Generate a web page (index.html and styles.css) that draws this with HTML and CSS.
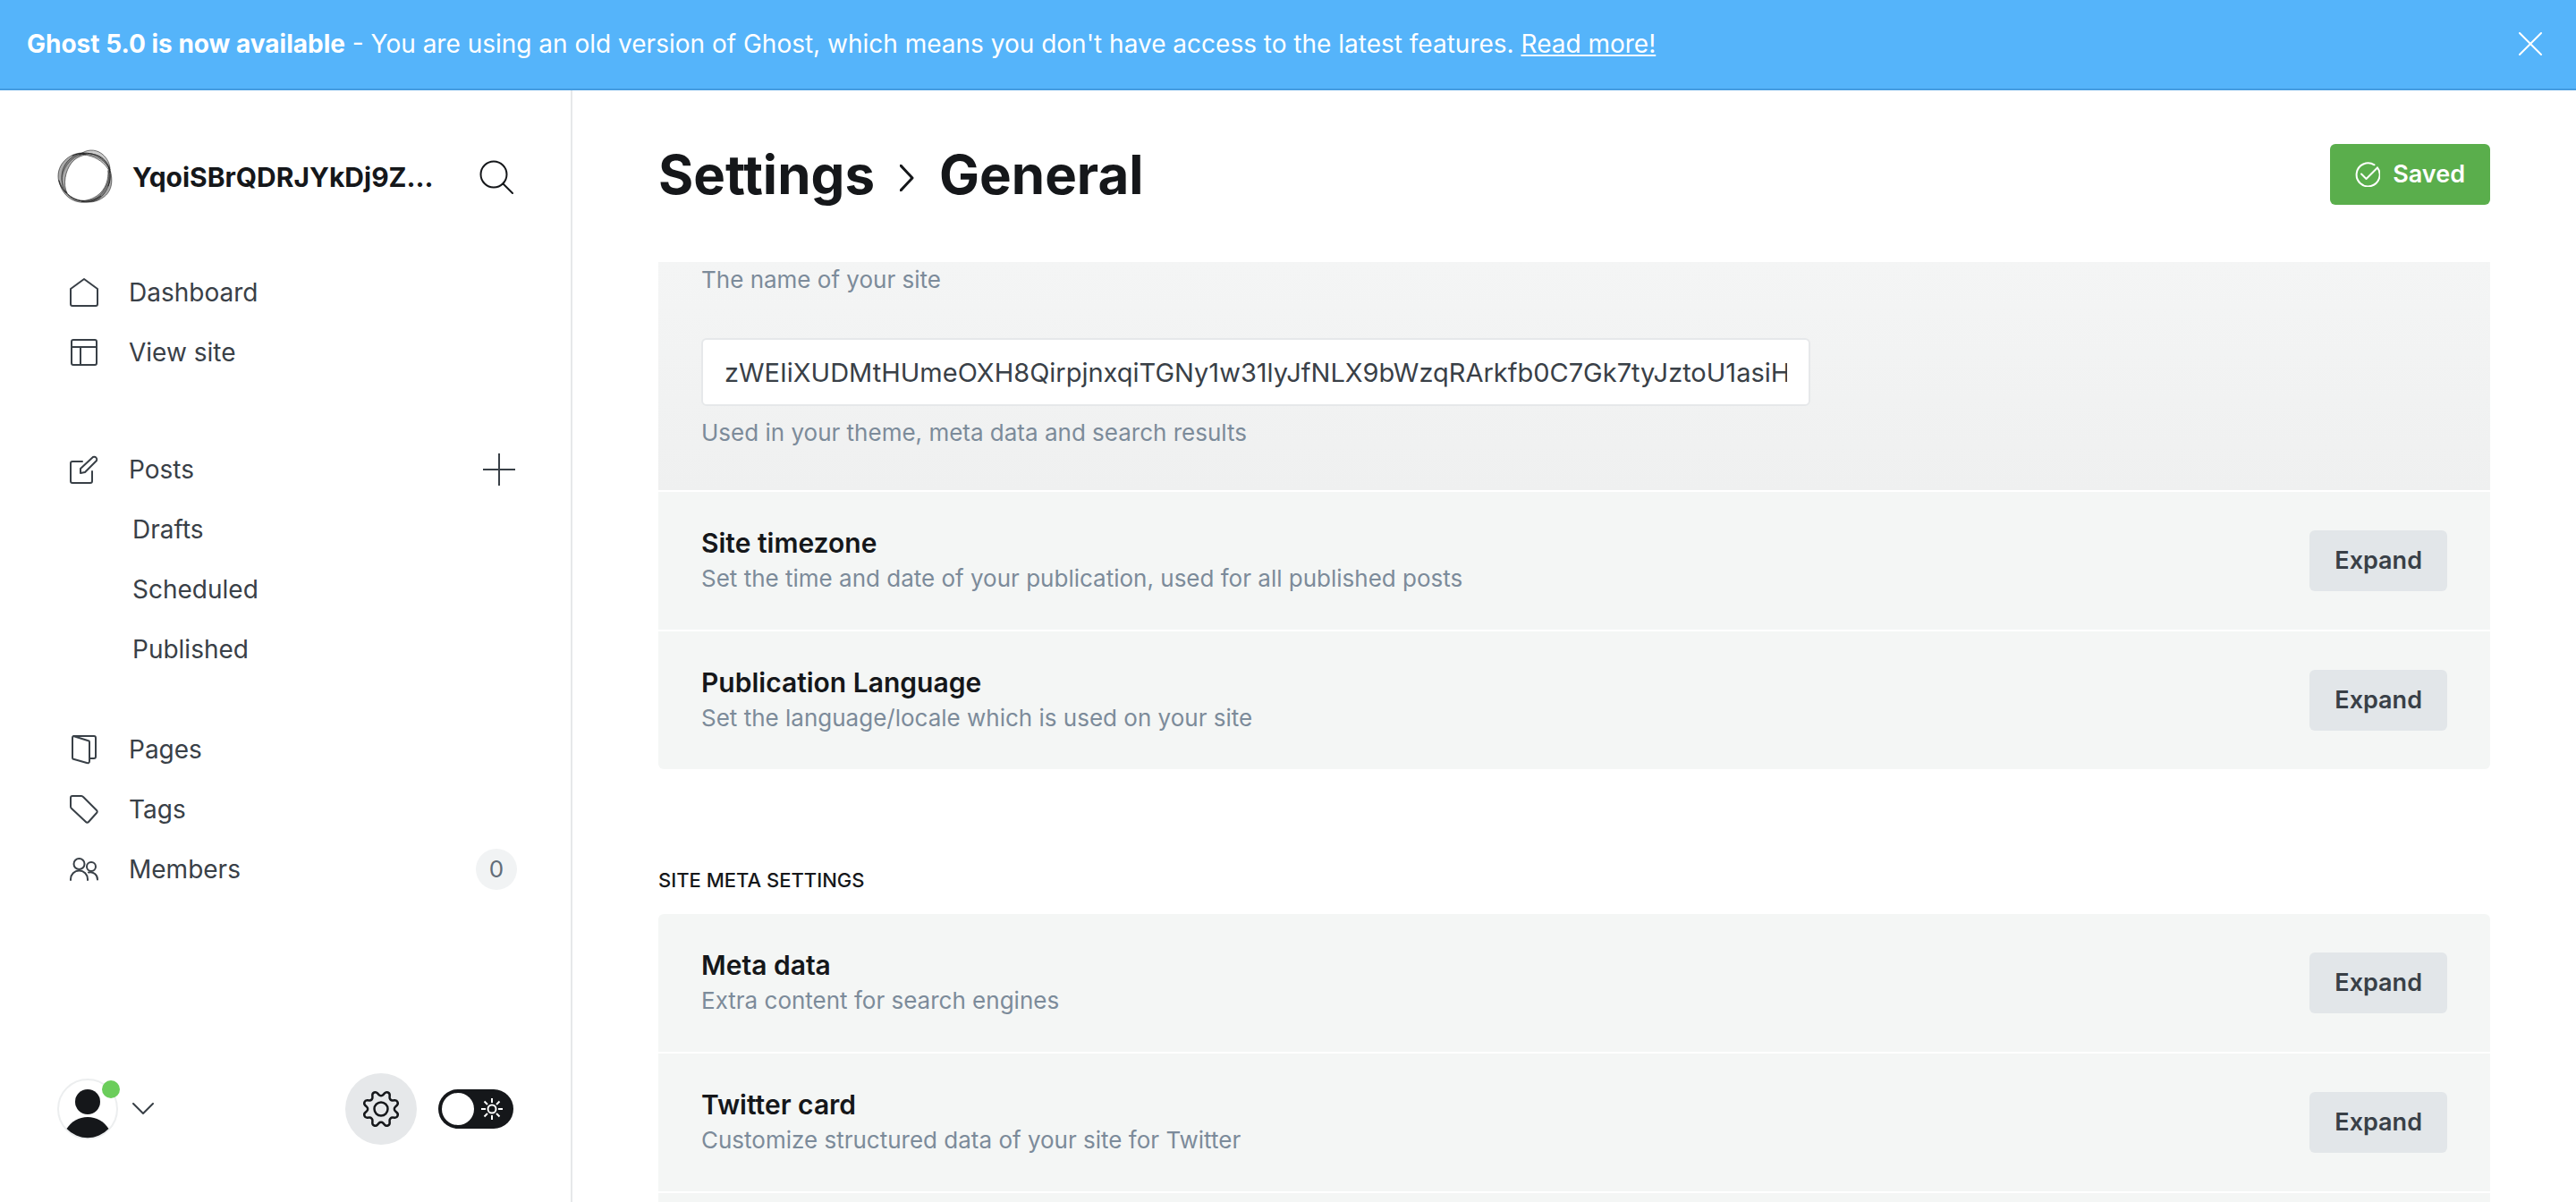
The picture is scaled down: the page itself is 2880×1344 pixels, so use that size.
FILE: index.html
```html
<!DOCTYPE html>
<html lang="en">
<head>
<meta charset="utf-8">
<title>Settings - General</title>
<link rel="stylesheet" href="styles.css">
</head>
<body>
<div class="app">
  <aside class="banner">
    <p class="banner-text"><strong>Ghost 5.0 is now available</strong> - You are using an old version of Ghost, which means you don't have access to the latest features. <a href="#">Read more!</a></p>
    <button class="icon-button" type="button" aria-label="Close">
      <svg class="icon-close" viewBox="0 0 26 26"><path d="M1 1l24 24M25 1L1 25"/></svg>
    </button>
  </aside>

  <div class="viewport">
    <nav class="sidebar">
      <header class="site">
        <svg class="site-logo" viewBox="0 0 62 62">
          <g fill="#555" fill-opacity=".5" stroke="#222" stroke-opacity=".75" stroke-width=".8">
            <path d="M30 4C16 3 1 14 1 30c0 8 4 14 9 19C5 43 4 33 7 25 11 14 20 7 30 5z"/>
            <path d="M26 5C12 8 4 20 5 34c1 6 3 11 6 15C6 39 9 24 16 15c5-6 11-8 16-9z"/>
            <path d="M25 6C32 0 42-1 50 5c6 5 9 11 9 18C54 13 45 8 36 6c-4-1-8-1-11 0z" fill-opacity=".3"/>
            <path d="M29 5c10-1 20 1 26 9 3 4 4 9 4 12C54 15 44 9 35 7z" fill-opacity=".3"/>
            <path d="M58 20c5 13 4 27-7 34-7 5-15 6-24 4 10 1 19-3 25-12 5-8 7-15 6-26z"/>
            <path d="M57 24c4 12-1 24-10 31-6 4-13 4-20 3 9-1 16-4 22-10 6-7 8-14 8-24z"/>
            <path d="M2 35c4 12 13 20 24 22 8 1 15 0 23-5-7 6-15 8-24 7C12 57 4 47 2 35z"/>
          </g>
          <g stroke="#222" stroke-width="1"><path d="M17 7c14-6 32-3 40 12 3 7 3 15 0 22M8 46c5 7 12 12 22 12"/></g>
        </svg>
        <span class="site-name">YqoiSBrQDRJYkDj9Z...</span>
        <button class="icon-button" type="button" aria-label="Search">
          <svg class="icon-search" viewBox="0 0 38 38"><circle cx="16" cy="16" r="14.5"/><path d="M26.500 26.500L37 37"/></svg>
        </button>
      </header>

      <ul class="nav">
        <li><a href="#"><svg class="icon" viewBox="0 0 34 34"><path d="M2 13L17 2l15 11v17a2 2 0 0 1-2 2H4a2 2 0 0 1-2-2z"/></svg>Dashboard</a></li>
        <li><a href="#"><svg class="icon" viewBox="0 0 34 34"><rect x="3" y="3" width="28" height="28" rx="2"/><path d="M3 11h28M13 11v20"/></svg>View site</a></li>
      </ul>
      <ul class="nav nav-posts">
        <li><a href="#"><svg class="icon" viewBox="0 0 34 34"><path d="M15 8H4a2 2 0 0 0-2 2v20a2 2 0 0 0 2 2h20a2 2 0 0 0 2-2V19"/><path d="M13 21v-5L27 3a3 3 0 0 1 4 4L18 20z"/></svg>Posts</a>
          <button class="icon-button" type="button" aria-label="New post"><svg class="icon-plus" viewBox="0 0 36 36"><path d="M18 0v36M0 18h36"/></svg></button></li>
        <li class="nav-sub"><a href="#">Drafts</a></li>
        <li class="nav-sub"><a href="#">Scheduled</a></li>
        <li class="nav-sub"><a href="#">Published</a></li>
      </ul>
      <ul class="nav nav-manage">
        <li><a href="#"><svg class="icon" viewBox="0 0 34 34"><path d="M5 2l16 5a2 2 0 0 1 2 2v21a2 2 0 0 1-3 2L6 28a2 2 0 0 1-2-2V4a2 2 0 0 1 2-2h22a2 2 0 0 1 2 2v21a2 2 0 0 1-2 2h-5"/></svg>Pages</a></li>
        <li><a href="#"><svg class="icon" viewBox="0 0 34 34"><path d="M2 4a2 2 0 0 1 2-2h10a3 3 0 0 1 2 1l15 15a2 2 0 0 1 0 3L22 31a2 2 0 0 1-3 0L3 16a3 3 0 0 1-1-2z"/></svg>Tags</a></li>
        <li><a href="#"><svg class="icon" viewBox="0 0 34 34"><circle cx="11.500" cy="11" r="6"/><path d="M2 29v-1a9.500 9.500 0 0 1 19 0v1"/><circle cx="25" cy="14" r="5"/><path d="M22 20.500a8 8 0 0 1 10 8"/></svg>Members</a><span class="count">0</span></li>
      </ul>

      <footer class="tools">
        <button class="account" type="button" aria-label="Account">
          <span class="avatar">
            <svg viewBox="0 0 68 68"><circle cx="34" cy="34" r="33" fill="#fff" stroke="#eceeef" stroke-width="2"/><circle cx="34" cy="26" r="14" fill="#15171a"/><path d="M10.500 56C16 48 24 43 34 43s18 5 23.500 13A32 32 0 0 1 10.500 56z" fill="#15171a"/></svg>
            <span class="status"></span>
          </span>
          <svg class="icon-chevron" viewBox="0 0 24 14"><path d="M1 1l11 11L23 1"/></svg>
        </button>
        <button class="settings-button" type="button" aria-label="Settings">
          <svg viewBox="0 0 24 24"><circle cx="12" cy="12" r="4.500"/><path d="M13.454 2.438a1.957 1.957 0 0 1-2.908 0L9.606 1.400A1.959 1.959 0 0 0 6.200 2.810l.069 1.401A1.958 1.958 0 0 1 4.213 6.271L2.813 6.200A1.958 1.958 0 0 0 1.400 9.606l1.041.945a1.960 1.960 0 0 1 0 2.909L1.400 14.400a1.958 1.958 0 0 0 1.416 3.407l1.400-.071a1.958 1.958 0 0 1 2.056 2.056l-.072 1.400a1.959 1.959 0 0 0 3.406 1.408l.945-1.041a1.959 1.959 0 0 1 2.908 0l.941 1.041a1.959 1.959 0 0 0 3.407-1.408l-.071-1.400a1.958 1.958 0 0 1 2.056-2.056l1.400.071a1.959 1.959 0 0 0 1.413-3.410l-1.042-.940a1.960 1.960 0 0 1 0-2.909l1.042-.940a1.959 1.959 0 0 0-1.410-3.410l-1.400.071a1.958 1.958 0 0 1-2.051-2.054l.071-1.400A1.959 1.959 0 0 0 14.400 1.400z"/></svg>
        </button>
        <label class="theme">
          <input type="checkbox" aria-label="Dark mode">
          <svg viewBox="0 0 24 24"><circle cx="12" cy="12" r="4.500"/><path d="M12 0v5M12 19v5M0 12h5M19 12h5M3.500 3.500L7 7M17 17l3.500 3.500M20.500 3.500L17 7M7 17l-3.500 3.500"/></svg>
        </label>
      </footer>
    </nav>

    <main class="main">
      <header class="page-head">
        <h1><a href="#">Settings</a><svg class="icon-crumb" viewBox="0 0 16 30"><path d="M1 1l13 14L1 29"/></svg>General</h1>
        <button class="button button-saved" type="button"><svg viewBox="0 0 28 28"><path d="M21.500 3.300A13 13 0 1 0 25 6.500"/><path d="M7 13.500l5.500 5.500L25 6.500"/></svg>Saved</button>
      </header>

      <div class="settings">
        <section class="group">
          <div class="row row-open">
            <p class="desc">The name of your site</p>
            <input class="field" id="site-title" type="text" aria-describedby="site-title-help" aria-label="Site title" value="zWEIiXUDMtHUmeOXH8QirpjnxqiTGNy1w31lyJfNLX9bWzqRArkfb0C7Gk7tyJztoU1asiHq">
            <p class="desc" id="site-title-help">Used in your theme, meta data and search results</p>
          </div>
          <div class="row">
            <div><h3>Site timezone</h3><p class="desc">Set the time and date of your publication, used for all published posts</p></div>
            <button class="button" type="button">Expand</button>
          </div>
          <div class="row">
            <div><h3>Publication Language</h3><p class="desc">Set the language/locale which is used on your site</p></div>
            <button class="button" type="button">Expand</button>
          </div>
        </section>

        <h2>Site meta settings</h2>
        <section class="group group-meta">
          <div class="row">
            <div><h3>Meta data</h3><p class="desc">Extra content for search engines</p></div>
            <button class="button" type="button">Expand</button>
          </div>
          <div class="row">
            <div><h3>Twitter card</h3><p class="desc">Customize structured data of your site for Twitter</p></div>
            <button class="button" type="button">Expand</button>
          </div>
          <div class="row"></div>
        </section>
      </div>
    </main>
  </div>
</div>
</body>
</html>
```
FILE: styles.css
```css
* { box-sizing: border-box; }

body {
  margin: 0;
  background: #fff;
  color: #15171a;
  font-family: Inter, "Liberation Sans", sans-serif;
  font-size: 28px;
  line-height: 40px;
}

h1, h2, h3, p, ul { margin: 0; padding: 0; }
ul { list-style: none; }
a { color: inherit; text-decoration: none; }
button { font: inherit; color: inherit; border: 0; background: none; padding: 0; cursor: pointer; }
svg { display: block; flex: none; fill: none; stroke: currentColor; stroke-width: 2; stroke-linecap: round; stroke-linejoin: round; }

.app { display: flex; flex-direction: column; height: 100vh; overflow: hidden; }

/* Upgrade notice */
.banner {
  display: flex;
  align-items: center;
  justify-content: space-between;
  padding: 29px 38px 30px 30px;
  border-bottom: 2px solid #459ce0;
  background: #55b4fa;
  color: #fff;
}
.banner strong { font-weight: 700; }
.banner a { text-decoration: underline; }
.icon-close { width: 26px; height: 26px; }

.viewport { display: flex; flex: 1; min-height: 0; }

/* Sidebar */
.sidebar {
  display: flex;
  flex-direction: column;
  flex: none;
  width: 640px;
  padding: 66px 60px 64px 64px;
  border-right: 2px solid #e6e8ea;
  color: #394047;
}
.site { display: flex; align-items: center; margin-bottom: 64px; color: #15171a; }
.site-logo { width: 62px; height: 62px; overflow: visible; }
.site-name { flex: 1; margin-left: 22px; font-size: 30px; font-weight: 700; white-space: nowrap; }
.icon-search { width: 38px; height: 38px; margin-right: 4px; }

.nav li { display: flex; align-items: center; justify-content: space-between; height: 67px; }
.nav a { display: flex; align-items: center; gap: 33px; margin-left: 13px; }
.nav-sub a { margin-left: 84px; }
.nav-posts { margin-top: 64px; }
.nav-manage { margin-top: 45px; }
.icon { width: 34px; height: 34px; }
.icon-plus { width: 36px; height: 36px; margin-right: 2px; }
.count {
  width: 46px;
  height: 46px;
  border-radius: 50%;
  background: #f1f3f4;
  color: #626d79;
  font-size: 26px;
  line-height: 46px;
  text-align: center;
}

.tools { display: flex; align-items: center; margin-top: auto; }
.account { display: flex; align-items: center; gap: 16px; margin-right: auto; }
.avatar { position: relative; width: 68px; height: 68px; }
.avatar svg { stroke: none; }
.status {
  position: absolute;
  top: 2px;
  right: -2px;
  width: 20px;
  height: 20px;
  border-radius: 50%;
  background: #6bcd5b;
}
.icon-chevron { width: 24px; height: 14px; }
.settings-button {
  display: grid;
  place-items: center;
  width: 80px;
  height: 80px;
  margin-right: 24px;
  border-radius: 50%;
  background: #e6e8ea;
  color: #15171a;
}
.settings-button svg { width: 40px; height: 40px; stroke-width: 1.5; overflow: visible; }
.theme {
  display: flex;
  align-items: center;
  justify-content: space-between;
  width: 84px;
  height: 44px;
  margin-right: 4px;
  padding: 4px 12px 4px 4px;
  border-radius: 22px;
  background: #15171a;
  color: #fff;
}
.theme input { appearance: none; width: 36px; height: 36px; margin: 0; border-radius: 50%; background: #fff; }
.theme svg { width: 24px; height: 24px; stroke-linecap: butt; }

/* Main column */
.main { display: flex; flex: 1; flex-direction: column; min-width: 0; padding: 0 96px; }
.page-head { display: flex; align-items: center; justify-content: space-between; padding: 57px 0 61px; }
h1 { display: flex; align-items: center; font-size: 60px; font-weight: 700; line-height: 74px; }
.icon-crumb { width: 16px; height: 30px; margin: 8px 28px 0 28px; stroke-width: 3; }

.button {
  display: flex;
  align-items: center;
  height: 68px;
  padding: 0 28px;
  border-radius: 6px;
  background: #e2e6e9;
  color: #394047;
  font-size: 27px;
  font-weight: 600;
}
.button-saved { gap: 14px; background: #5aae4c; color: #fff; }
.button-saved svg { width: 28px; height: 28px; }

.settings { flex: 1; min-height: 0; overflow: hidden; }
.group { display: flex; flex-direction: column; gap: 2px; border-radius: 0 0 6px 6px; overflow: hidden; }
.group-meta { border-radius: 6px 6px 0 0; }
.row {
  display: flex;
  align-items: center;
  justify-content: space-between;
  height: 154px;
  padding: 0 48px;
  background: #f4f6f5;
}
.row-open {
  display: block;
  height: auto;
  padding: 0 48px 44px;
  background: linear-gradient(#f4f5f5, #eff0f0);
}
.field {
  display: block;
  width: 1240px;
  max-width: 100%;
  height: 76px;
  margin: 45px 0 10px;
  padding: 0 24px;
  border: 2px solid #e6e8ea;
  border-radius: 6px;
  background: #fff;
  color: #394047;
  font: inherit;
  font-size: 29px;
}
h2 { margin: 104px 0 18px; font-size: 22px; font-weight: 500; line-height: 40px; text-transform: uppercase; }
h3 { font-size: 30px; font-weight: 600; line-height: 40px; }
.desc { color: #7c8b9a; font-size: 26px; line-height: 40px; }
```
